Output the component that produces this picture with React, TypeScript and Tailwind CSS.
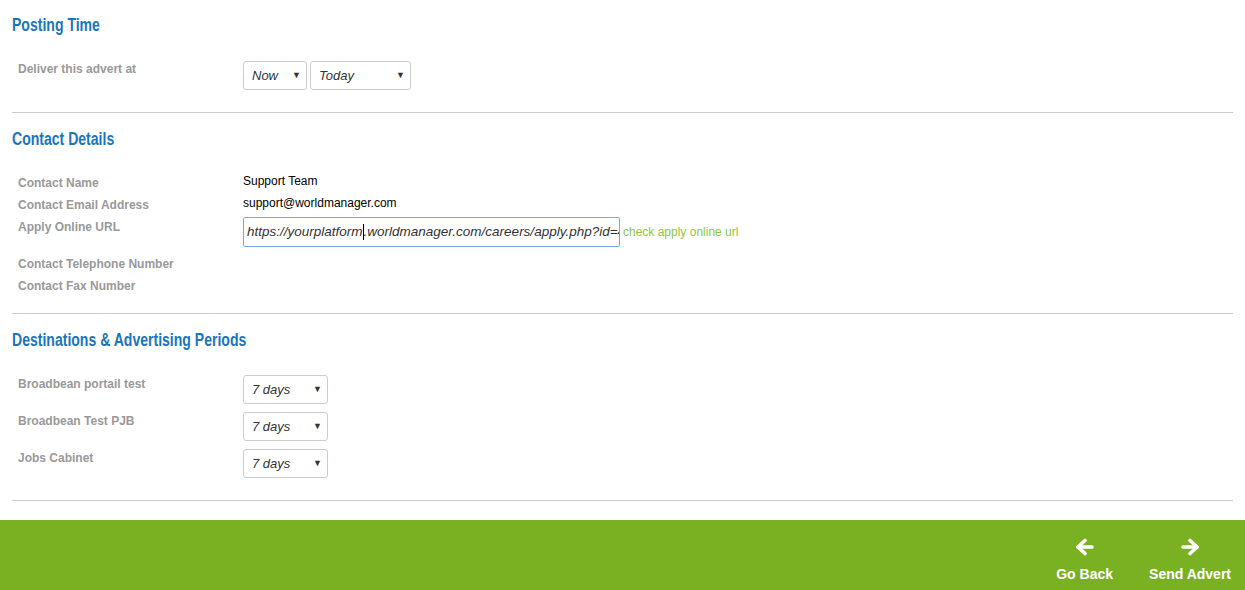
import React from "react";

const heading = "inline-block origin-left scale-x-[0.78] font-['Liberation_Sans',Arial,sans-serif] font-bold text-[18px] leading-6 text-[#1b75bb] whitespace-nowrap";
const label = "w-[225px] shrink-0 text-[12px] font-bold leading-[22px] text-[#999999]";

const Select = ({ value, width }: { value: string; width: string }) => (
  <div
    className={`${width} h-[29px] flex items-center justify-between pl-2 pr-[5px] border border-[#cccccc] rounded-[3px] bg-white text-[13px] italic text-[#333333]`}
  >
    <span>{value}</span>
    <span className="text-[9px] not-italic text-[#333333]">▼</span>
  </div>
);

const Arrow = ({ dir }: { dir: "left" | "right" }) => (
  <svg width="20" height="18" viewBox="0 0 20 18" fill="none">
    <g
      stroke="white"
      strokeWidth="3.6"
      strokeLinecap="round"
      strokeLinejoin="round"
      transform={dir === "left" ? "" : "translate(20 0) scale(-1 1)"}
    >
      <path d="M3 9 H17" />
      <path d="M10 2.5 L3 9 L10 15.5" />
    </g>
  </svg>
);

export default function App() {
  return (
    <div className="w-[1245px] h-[590px] bg-white font-['Liberation_Sans',Arial,sans-serif] overflow-hidden flex flex-col">
      <div className="px-3">
        {/* Posting Time */}
        <section className="pt-[13px] pb-[17px] border-b border-[#cccccc]">
          <div className="h-6">
            <h2 className={heading}>Posting Time</h2>
          </div>
          <div className="pl-1.5 mt-[21px]">
            <div className="flex h-[37px]">
              <div className={label}>Deliver this advert at</div>
              <div className="flex gap-[3px] mt-[3px]">
                <Select value="Now" width="w-[64px]" />
                <Select value="Today" width="w-[101px]" />
              </div>
            </div>
          </div>
        </section>

        {/* Contact Details */}
        <section className="pt-[14px] pb-[16px] border-b border-[#cccccc]">
          <div className="h-6">
            <h2 className={heading}>Contact Details</h2>
          </div>
          <div className="pl-1.5 mt-[21px]">
            <div className="flex h-[22px]">
              <div className={label}>Contact Name</div>
              <div className="text-[12px] leading-[18px] text-black">Support Team</div>
            </div>
            <div className="flex h-[22px]">
              <div className={label}>Contact Email Address</div>
              <div className="text-[12px] leading-[18px] text-black">support@worldmanager.com</div>
            </div>
            <div className="flex h-[37px]">
              <div className={label}>Apply Online URL</div>
              <div className="flex items-center mt-px h-[30px]">
                <div className="w-[377px] h-[30px] flex items-center px-[3px] border border-[#7aa7e8] rounded-[2px] overflow-hidden whitespace-nowrap text-[13.5px] italic text-[#333333]">
                  <span className="shrink-0">https://yourplatform</span>
                  <span className="shrink-0 inline-block w-px h-[16px] bg-black" />
                  <span className="shrink-0">.worldmanager.com/careers/apply.php?id=4</span>
                </div>
                <span className="ml-[3px] text-[12px] text-[#8cc63f]">check apply online url</span>
              </div>
            </div>
            <div className="flex h-[22px]">
              <div className={label}>Contact Telephone Number</div>
            </div>
            <div className="flex h-[22px]">
              <div className={label}>Contact Fax Number</div>
            </div>
          </div>
        </section>

        {/* Destinations */}
        <section className="pt-[14px] pb-[16px] border-b border-[#cccccc]">
          <div className="h-6">
            <h2 className={heading}>Destinations &amp; Advertising Periods</h2>
          </div>
          <div className="pl-1.5 mt-[21px]">
            {["Broadbean portail test", "Broadbean Test PJB", "Jobs Cabinet"].map((name) => (
              <div key={name} className="flex h-[37px]">
                <div className={label}>{name}</div>
                <div className="mt-[2px]">
                  <Select value="7 days" width="w-[85px]" />
                </div>
              </div>
            ))}
          </div>
        </section>
      </div>

      {/* Footer */}
      <footer className="mt-[19px] h-[70px] bg-[#7ab123] flex justify-end items-start pr-[14px] gap-[36px]">
        <button className="flex flex-col items-center pt-[18px] text-white text-[14px] font-bold">
          <Arrow dir="left" />
          <span className="mt-[10px] leading-4">Go Back</span>
        </button>
        <button className="flex flex-col items-center pt-[18px] text-white text-[14px] font-bold">
          <Arrow dir="right" />
          <span className="mt-[10px] leading-4">Send Advert</span>
        </button>
      </footer>
    </div>
  );
}
